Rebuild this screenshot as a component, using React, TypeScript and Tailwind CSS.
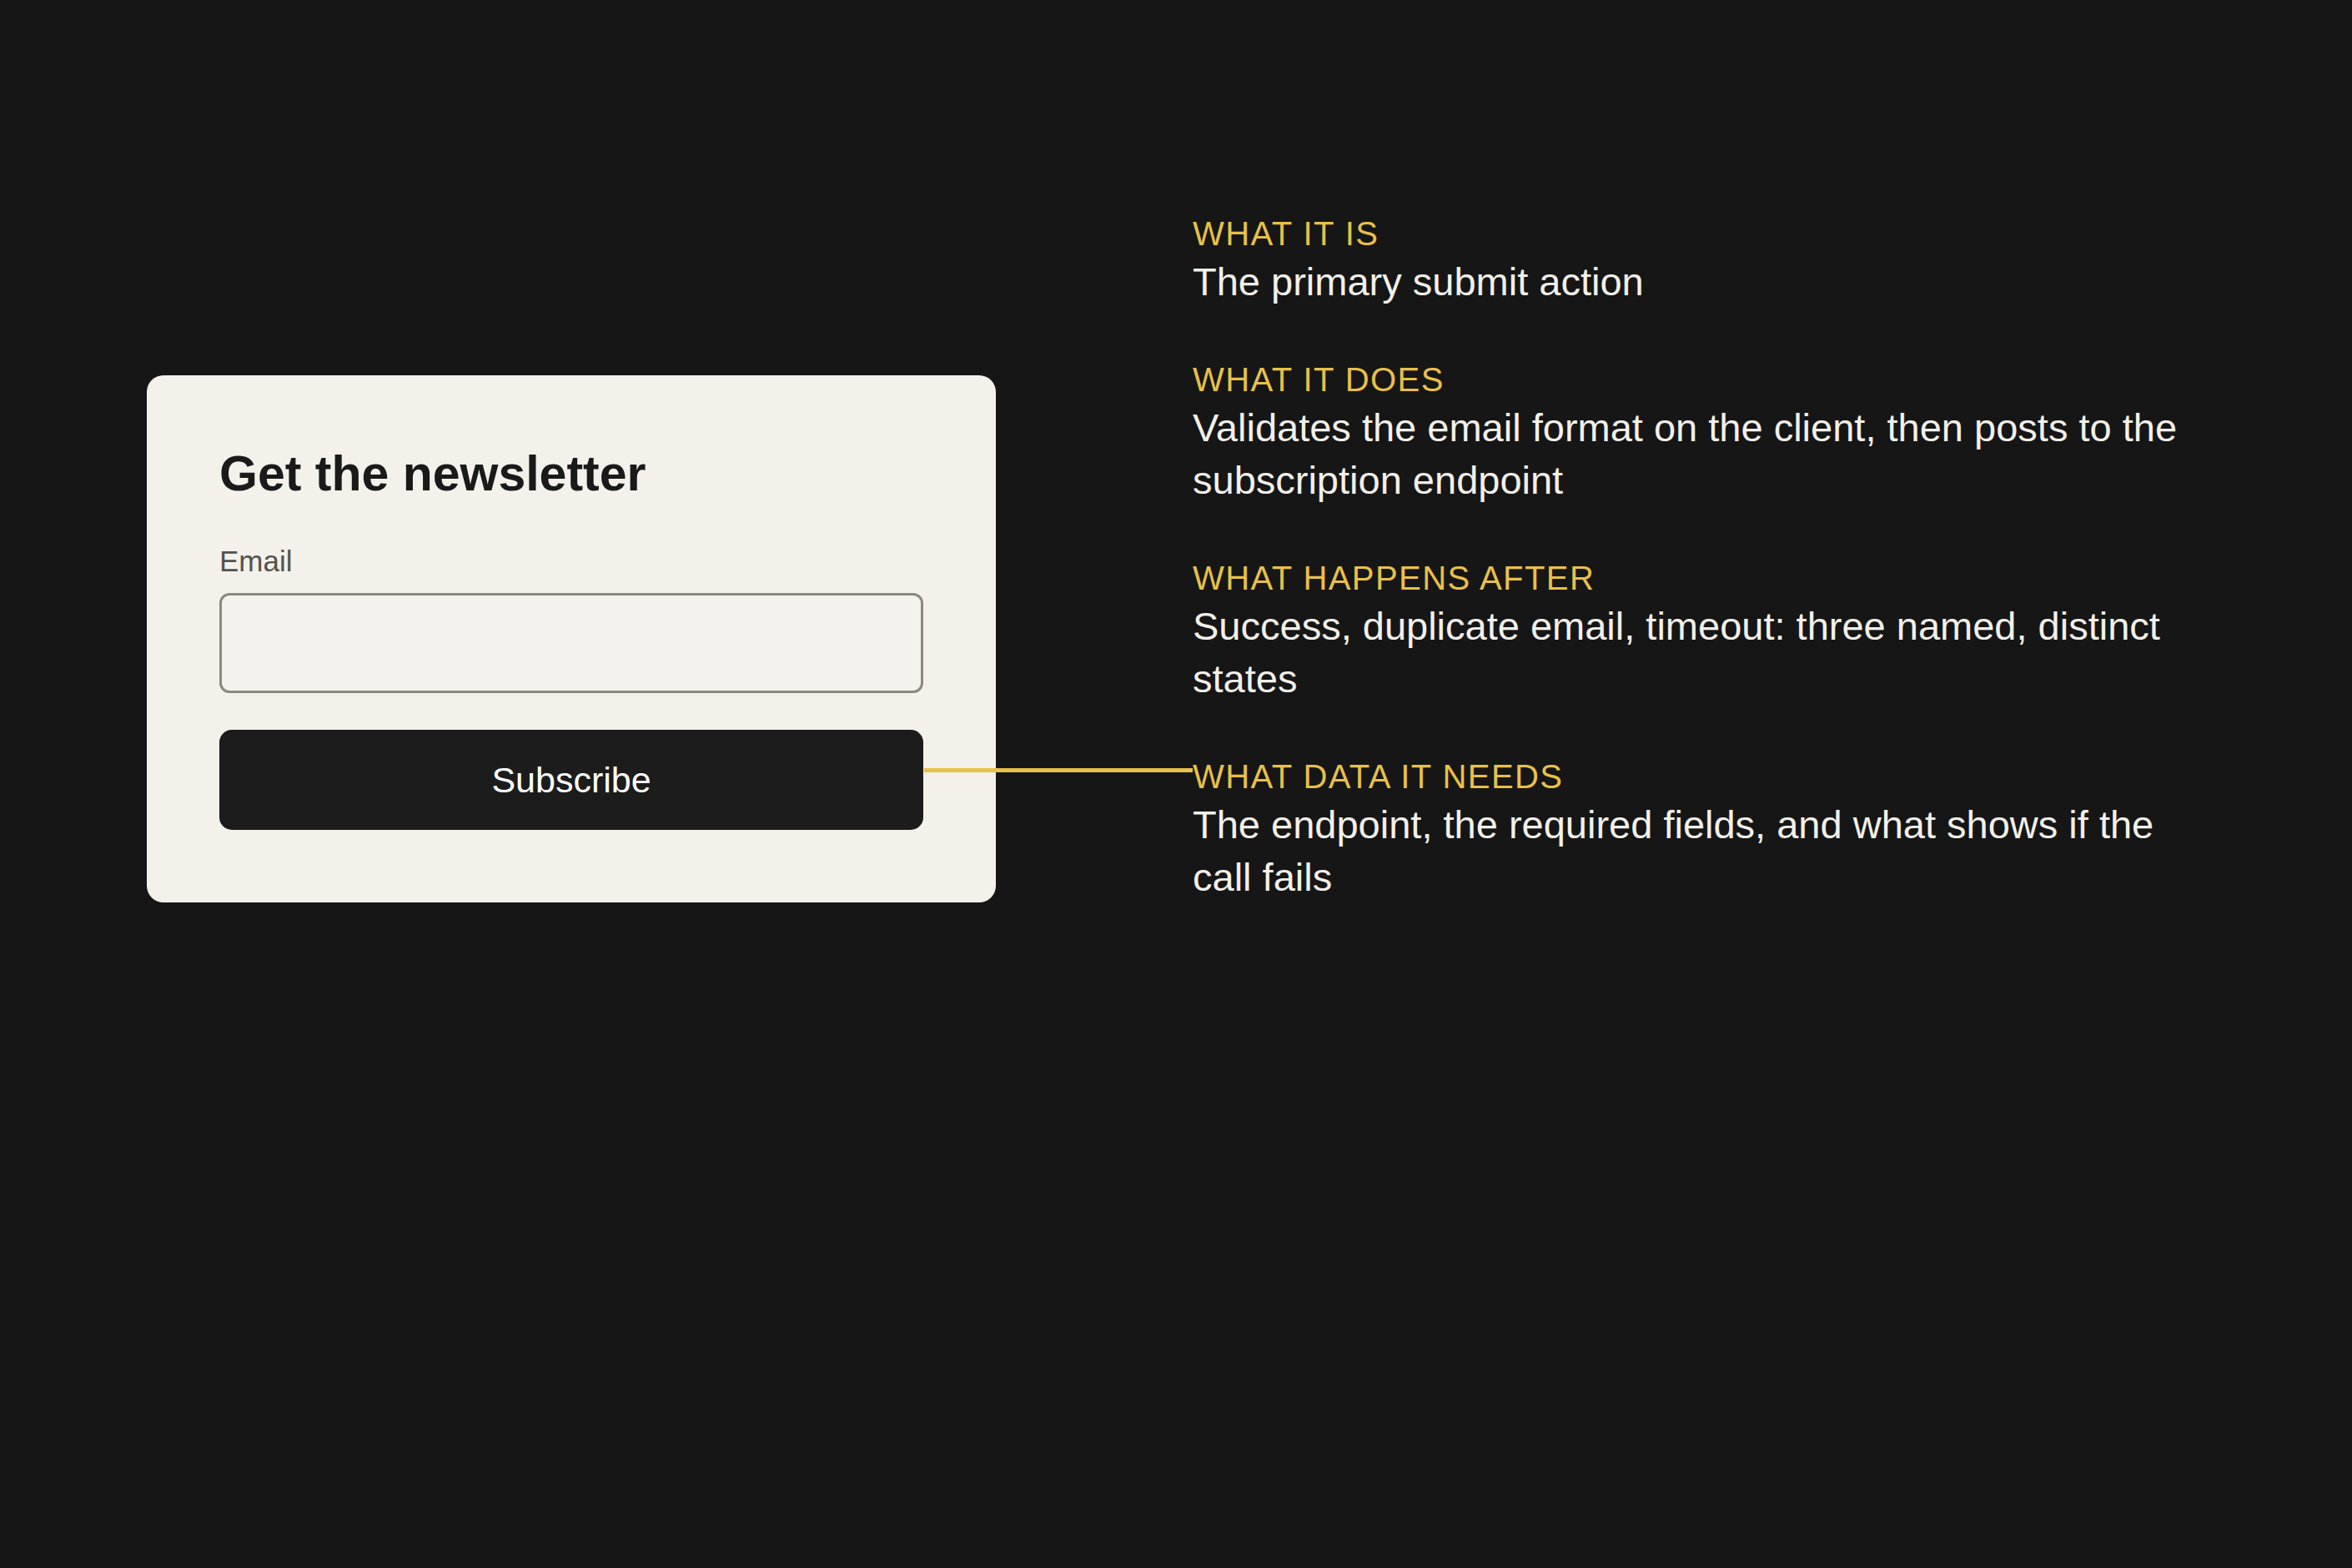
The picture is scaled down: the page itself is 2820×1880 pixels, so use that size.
import React from 'react';

const NOTES: { label: string; body: string }[] = [
  { label: 'What it is', body: 'The primary submit action' },
  {
    label: 'What it does',
    body: 'Validates the email format on the client, then posts to the subscription endpoint',
  },
  {
    label: 'What happens after',
    body: 'Success, duplicate email, timeout: three named, distinct states',
  },
  {
    label: 'What data it needs',
    body: 'The endpoint, the required fields, and what shows if the call fails',
  },
];

function NewsletterCard() {
  return (
    <div className="w-[1018px] shrink-0 mt-[196px] rounded-[20px] bg-[#f3f1ea] px-[87px] pt-[86px] pb-[87px]">
      <h2 className="text-[59px] leading-[64px] font-bold text-[#1a1a1a]">Get the newsletter</h2>
      <label className="block mt-[51px] text-[35px] leading-[44px] text-[#55524d]">Email</label>
      <input
        type="email"
        className="block mt-[16px] w-full h-[120px] rounded-[12px] border-[3px] border-[#8c8881] bg-[#f4f2ec] px-6 text-[34px] outline-none"
      />
      <button className="mt-[44px] w-full h-[120px] rounded-[15px] bg-[#1c1c1c] text-[43px] text-white">
        Subscribe
      </button>
    </div>
  );
}

export default function App() {
  return (
    <div
      className="relative min-h-[1880px] w-full bg-[#161616]"
      style={{ fontFamily: '"Liberation Sans", Arial, Helvetica, sans-serif' }}
    >
      <div className="flex items-start pl-[176px] pt-[254px]">
        <NewsletterCard />

        {/* annotation column */}
        <div className="ml-[236px] w-[1200px] flex flex-col gap-[60px]">
          {NOTES.map(note => (
            <div key={note.label}>
              <div className="text-[40px] leading-[52px] uppercase tracking-[0.036em] text-[#e8c04a]">
                {note.label}
              </div>
              <p className="text-[47px] leading-[63px] text-[#f2f0ea]">{note.body}</p>
            </div>
          ))}
        </div>
      </div>

      {/* leader line from the button to its note */}
      <div className="absolute left-[1108px] top-[921px] w-[322px] h-[5px] bg-[#e8c04a]" />
    </div>
  );
}
